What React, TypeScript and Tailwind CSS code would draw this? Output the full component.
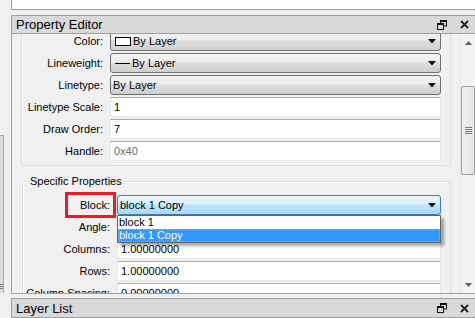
import React from "react";

function DockTitle({ title }: { title: string }) {
  return (
    <div className="flex h-[20px] items-center border-l border-t border-b border-[#a0a0a0] bg-[#d9d9d9] pl-[4px] pr-[4px]">
      <span className="flex-1 text-[13px] leading-none text-black">{title}</span>
      <svg width="10" height="10" viewBox="0 0 10 10" className="mr-[13px]">
        <rect x="3.5" y="0.5" width="6" height="5.5" fill="none" stroke="#111" strokeWidth="1" />
        <rect x="3.5" y="0.5" width="6" height="1.5" fill="#111" />
        <rect x="0.5" y="3.5" width="6" height="6" fill="#d9d9d9" stroke="#111" strokeWidth="1" />
        <rect x="0.5" y="3.5" width="6" height="1.5" fill="#111" />
      </svg>
      <svg width="9" height="9" viewBox="0 0 9 9" className="mr-[2px]">
        <path d="M1 1 L8 8 M8 1 L1 8" stroke="#222" strokeWidth="1.8" />
      </svg>
    </div>
  );
}

function Arrow() {
  return (
    <svg width="8" height="5" viewBox="0 0 8 5">
      <path d="M0 0 H8 L4 4.5 Z" fill="#111" />
    </svg>
  );
}

function Combo({ children, active }: { children: React.ReactNode; active?: boolean }) {
  return (
    <div
      className={
        active
          ? "flex h-[20px] items-center rounded-[3px] border border-[#3c7fb1] bg-[linear-gradient(#eaf6fd_0%,#d9f0fc_45%,#bee6fd_50%,#a7d9f5_100%)] pl-[2px] pr-[4px]"
          : "flex h-[20px] items-center rounded-[3px] border border-[#707070] bg-[linear-gradient(#f2f2f2_0%,#ebebeb_45%,#dddddd_50%,#cfcfcf_100%)] pl-[2px] pr-[4px]"
      }
    >
      <div className="flex flex-1 items-center gap-[2px]">{children}</div>
      <Arrow />
    </div>
  );
}

function Field({ value, muted }: { value: string; muted?: boolean }) {
  return (
    <div
      className={
        "flex h-[20px] items-center border border-[#e3e9ef] border-t-[#abadb3] bg-white pl-[3px] " +
        (muted ? "text-[#6d6d6d]" : "text-black")
      }
    >
      {value}
    </div>
  );
}

function Label({ text }: { text: string }) {
  return <div className="flex h-[20px] items-center justify-end">{text}</div>;
}

export default function App() {
  return (
    <div className="flex h-[318px] w-[475px] overflow-hidden bg-[#f0f0f0] font-['Liberation_Sans',Arial,sans-serif] text-[11px] text-black">
      {/* left dock edge */}
      <div className="flex w-[11px] flex-col">
        <div className="h-[135px]" />
        <div className="flex h-[158px] w-[4px] flex-col items-center justify-end gap-[1px] border-r border-t border-[#a8a8a8] bg-[#dcdcdc] pb-[4px]">
          <div className="h-px w-[3px] bg-[#777]" />
          <div className="h-px w-[3px] bg-[#777]" />
          <div className="h-px w-[3px] bg-[#777]" />
        </div>
      </div>

      <div className="flex flex-1 flex-col">
        <div className="h-[10px] border-b border-l border-[#a0a0a0] bg-white" />
        <div className="h-[5px]" />
        <DockTitle title="Property Editor" />

        <div className="flex h-[260px] border-b border-l border-[#a0a0a0]">
          {/* scrolled content */}
          <div className="flex-1 overflow-hidden px-[9px]">
            <div className="mt-[-4px] rounded-[3px] border border-[#d5dfe5] pb-[4px] shadow-[inset_1px_1px_0_#ffffff]">
              <div className="grid grid-cols-[81px_1fr] gap-x-[7px] gap-y-[2px] pr-[9px]">
                <Label text="Color:" />
                <Combo>
                  <span className="ml-[2px] inline-block h-[9px] w-[16px] border border-black bg-white" />
                  <span>By Layer</span>
                </Combo>
                <Label text="Lineweight:" />
                <Combo>
                  <span className="ml-[2px] inline-block h-px w-[15px] bg-black" />
                  <span>By Layer</span>
                </Combo>
                <Label text="Linetype:" />
                <Combo>
                  <span>By Layer</span>
                </Combo>
                <Label text="Linetype Scale:" />
                <Field value="1" />
                <Label text="Draw Order:" />
                <Field value="7" />
                <Label text="Handle:" />
                <Field value="0x40" muted />
              </div>
            </div>

            <div className="relative mt-[15px] ml-[1px] rounded-[3px] border border-[#d5dfe5] pt-[13px] shadow-[inset_1px_1px_0_#ffffff]">
              <div className="absolute left-[6px] top-[-8px] bg-[#f0f0f0] px-px text-[11px] leading-[14px]">
                Specific Properties
              </div>
              <div className="grid grid-cols-[87px_1fr] gap-x-[7px] gap-y-[2px] pr-[9px]">
                <div className="relative">
                  <Label text="Block:" />
                  <div className="absolute left-[42px] top-[-3px] h-[26px] w-[51px] border-[3px] border-[#ed1c24]" />
                </div>
                <div className="relative">
                  <Combo active>
                    <span>block 1 Copy</span>
                  </Combo>
                  <div className="absolute left-0 right-0 top-[20px] z-10 border border-[#646464] bg-white shadow-[3px_3px_3px_rgba(0,0,0,0.35)]">
                    <div className="flex h-[13px] items-center pl-[1px] leading-none">block 1</div>
                    <div className="flex h-[13px] items-center border border-dotted border-[#f0a040] bg-[#3399ff] pl-0 leading-none text-white">
                      block 1 Copy
                    </div>
                  </div>
                </div>
                <Label text="Angle:" />
                <Field value="0" />
                <Label text="Columns:" />
                <Field value="1.00000000" />
                <Label text="Rows:" />
                <Field value="1.00000000" />
                <Label text="Column Spacing:" />
                <Field value="0.00000000" />
                <Label text="Row Spacing:" />
                <Field value="0.00000000" />
              </div>
            </div>
          </div>

          {/* scrollbar */}
          <div className="flex w-[15px] flex-col border-l border-[#e6e6e6] bg-[#f3f3f3]">
            <div className="flex h-[17px] items-center justify-center">
              <svg width="7" height="4" viewBox="0 0 7 4">
                <path d="M0 4 H7 L3.5 0 Z" fill="#606060" />
              </svg>
            </div>
            <div className="h-[35px]" />
            <div className="flex h-[89px] flex-col items-center justify-center gap-[1px] rounded-[2px] border border-[#9e9e9e] bg-[linear-gradient(90deg,#f2f2f2,#e4e4e4)]">
              <div className="h-px w-[7px] bg-[#7a7a7a]" />
              <div className="h-px w-[7px] bg-[#7a7a7a]" />
              <div className="h-px w-[7px] bg-[#7a7a7a]" />
              <div className="h-px w-[7px] bg-[#7a7a7a]" />
            </div>
            <div className="flex-1" />
            <div className="flex h-[17px] items-center justify-center">
              <svg width="7" height="4" viewBox="0 0 7 4">
                <path d="M0 0 H7 L3.5 4 Z" fill="#606060" />
              </svg>
            </div>
          </div>
        </div>

        <div className="h-[4px]" />
        <DockTitle title="Layer List" />
      </div>
    </div>
  );
}
